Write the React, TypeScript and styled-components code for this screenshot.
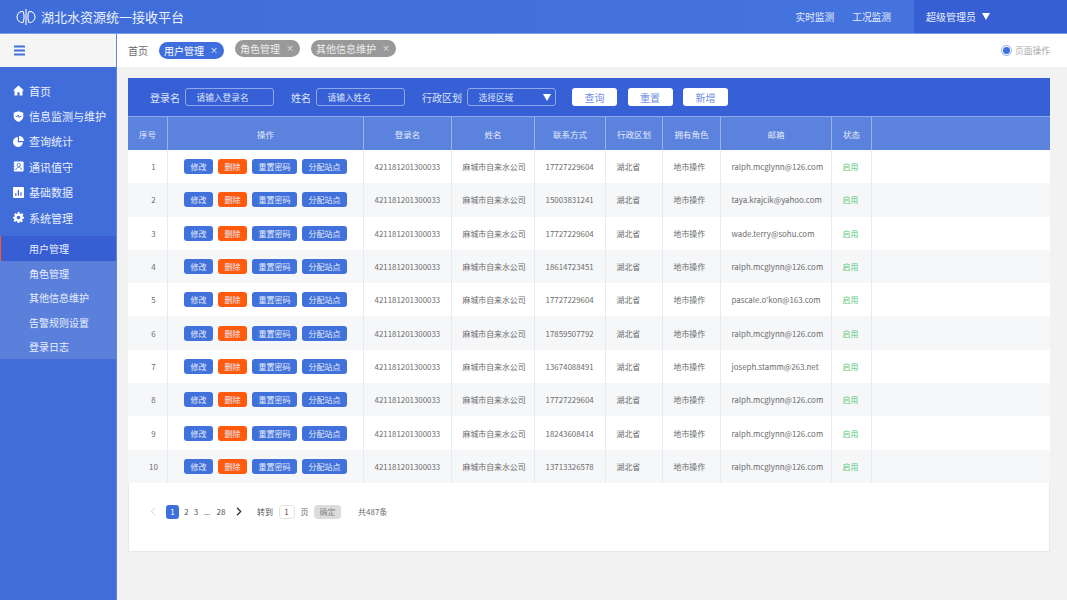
import React from "react";
import styled, { createGlobalStyle } from "styled-components";

const Global = createGlobalStyle`
  html, body { margin: 0; padding: 0; height: 100%; }
  body { font-family: "Noto Sans CJK SC", "Noto Sans", sans-serif; background: #f2f2f2; overflow: hidden; }
  #root { height: 100%; }
  * { box-sizing: border-box; }
`;

const Page = styled.div`
  width: 1067px;
  height: 600px;
  display: flex;
  flex-direction: column;
  overflow: hidden;
`;

const Header = styled.header`
  height: 34px;
  flex: none;
  display: flex;
  align-items: center;
  background: linear-gradient(90deg, #3e6cd9 0%, #4674de 85%);
  border-bottom: 1px solid #7f9ee8;
  color: #fff;
`;

const Brand = styled.div`
  display: flex;
  align-items: center;
  gap: 5px;
  padding-left: 16px;
  font-size: 13px;
  color: #eef3fd;
  flex: 1;
  svg { display: block; }
`;

const TopNav = styled.nav`
  display: flex;
  gap: 18px;
  padding-right: 23px;
  font-size: 9.7px;
  color: #e6edfb;
`;

const UserBox = styled.div`
  width: 153px;
  height: 33px;
  padding-left: 12px;
  display: flex;
  align-items: center;
  gap: 6px;
  background: #375fd3;
  font-size: 10px;
  color: #e6edfb;
`;

const Caret = styled.span`
  width: 0;
  height: 0;
  border-left: 4.5px solid transparent;
  border-right: 4.5px solid transparent;
  border-top: 7px solid #fff;
`;

const Body = styled.div`
  flex: 1;
  display: flex;
  min-height: 0;
`;

const Sidebar = styled.aside`
  width: 117px;
  flex: none;
  display: flex;
  flex-direction: column;
  background: #416ddb;
  border-right: 1px solid #5f84de;
`;

const Burger = styled.div`
  height: 33px;
  background: #f5f5f5;
  display: flex;
  align-items: center;
  padding-left: 14px;
`;

const Menu = styled.ul`
  list-style: none;
  margin: 0;
  padding: 11px 0 0;
`;

const MenuItem = styled.li`
  height: 25.4px;
  display: flex;
  align-items: center;
  gap: 5px;
  padding-left: 13px;
  font-size: 11px;
  color: #e9effc;
  white-space: nowrap;
  svg { flex: none; display: block; }
`;

const SubMenu = styled.ul`
  list-style: none;
  margin: 6px 0 0;
  padding: 0;
  background: #5a80dc;
`;

const SubItem = styled.li<{ $active?: boolean }>`
  height: 24.5px;
  display: flex;
  align-items: center;
  padding-left: ${(p) => (p.$active ? "28px" : "29px")};
  font-size: 10px;
  color: #e9effc;
  background: ${(p) => (p.$active ? "#375fd3" : "transparent")};
  border-left: ${(p) => (p.$active ? "1px solid #ff5a1f" : "0")};
`;

const Main = styled.main`
  flex: 1;
  min-width: 0;
  display: flex;
  flex-direction: column;
`;

const TabBar = styled.div`
  height: 33px;
  flex: none;
  background: #fff;
  display: flex;
  align-items: center;
  padding: 0 17px 1px 11px;
`;

const Crumb = styled.span`
  font-size: 10px;
  color: #666;
  margin-right: 11px;
`;

const Tab = styled.span<{ $active?: boolean }>`
  height: 17px;
  display: inline-flex;
  align-items: center;
  gap: 6px;
  padding: 0 6px 0 5px;
  margin-right: 11px;
  border-radius: 9px;
  font-size: 10px;
  color: ${(p) => (p.$active ? "#fff" : "#eee")};
  background: ${(p) => (p.$active ? "#3f6fdc" : "#999")};
  transform: translateY(${(p) => (p.$active ? "0" : "-2px")});
`;

const TabClose = styled.span`
  font-size: 8px;
  line-height: 1;
`;

const PageMode = styled.label`
  margin-left: auto;
  display: flex;
  align-items: center;
  gap: 3px;
  font-size: 8.75px;
  color: #aaa;
`;

const RadioDot = styled.span`
  width: 11px;
  height: 11px;
  border-radius: 50%;
  border: 1px solid #8fb0ee;
  background: #fff;
  display: flex;
  align-items: center;
  justify-content: center;
  &::after {
    content: "";
    width: 7px;
    height: 7px;
    border-radius: 50%;
    background: #3f6fdc;
  }
`;

const Content = styled.div`
  flex: 1;
  padding: 11px 17px 48px 11px;
  min-height: 0;
`;

const Panel = styled.section`
  height: 474px;
  background: #fff;
  border: 1px solid #e8e8e8;
  border-top: 0;
  display: flex;
  flex-direction: column;
`;

const FilterBar = styled.div`
  height: 38px;
  flex: none;
  display: flex;
  align-items: center;
  padding-left: 22px;
  margin: 0 -1px;
  background: #3860d6;
  font-size: 10px;
  color: #dde6fa;
`;

const FieldLabel = styled.span<{ $gap: number }>`
  margin-right: ${(p) => p.$gap}px;
  white-space: nowrap;
`;

const FieldBox = styled.div<{ $gapRight: number }>`
  width: 89px;
  height: 18px;
  border: 1px solid #8ea8ea;
  border-radius: 3px;
  margin-right: ${(p) => p.$gapRight}px;
  padding: 0 4px 0 10.5px;
  display: flex;
  align-items: center;
  justify-content: space-between;
  font-size: 8.7px;
  color: #dde6fa;
`;

const ActionBtn = styled.button`
  width: 45px;
  height: 18px;
  margin-right: 10.5px;
  border: 0;
  padding: 0;
  border-radius: 3px;
  background: #fff;
  color: #6f8fe3;
  font: inherit;
  font-size: 10px;
`;

const gridCols = "40px 196px 88px 83px 71px 57px 58px 111px 40px 1fr";

const HeadRow = styled.div`
  height: 34px;
  flex: none;
  display: grid;
  grid-template-columns: ${gridCols};
  margin: 0 -1px;
  background: #5b82dc;
  border-top: 1px solid #8aa5e8;
`;

const HeadCell = styled.div`
  display: flex;
  align-items: center;
  justify-content: center;
  font-size: 8.5px;
  color: #e4ebfb;
  border-right: 1px solid #9ab2ec;
  &:last-child { border-right: 0; }
`;

const Row = styled.div<{ $alt: boolean }>`
  height: 33.3px;
  flex: none;
  display: grid;
  grid-template-columns: ${gridCols};
  background: ${(p) => (p.$alt ? "#f6f7f9" : "#fff")};
  margin: 0 -1px;
`;

const Cell = styled.div<{ $color?: string }>`
  display: flex;
  align-items: center;
  padding-left: 10.5px;
  font-size: 7.9px;
  color: ${(p) => p.$color ?? "#6c6c6c"};
  border-right: 1px solid #e8eaee;
  white-space: nowrap;
  &:last-child { border-right: 0; }
`;

const IndexCell = styled(Cell)`
  justify-content: center;
  padding-left: 12px;
`;

const OpCell = styled(Cell)`
  justify-content: center;
  padding-left: 0;
  gap: 5px;
`;

const OpBtn = styled.span<{ $danger?: boolean; $w: number }>`
  width: ${(p) => p.$w}px;
  height: 15px;
  border-radius: 3px;
  display: flex;
  align-items: center;
  justify-content: center;
  font-size: 8px;
  color: #e4ebfb;
  background: ${(p) => (p.$danger ? "#ff5a0e" : "#4171da")};
`;

const Pager = styled.div`
  height: 14px;
  margin-top: 22px;
  display: flex;
  align-items: center;
  font-size: 8px;
  color: #6c6c6c;
`;

const PageSlot = styled.span<{ $w: number; $current?: boolean; $ml?: number }>`
  width: ${(p) => p.$w}px;
  height: 14px;
  margin-left: ${(p) => p.$ml ?? 0}px;
  display: flex;
  align-items: center;
  justify-content: center;
  border-radius: 3px;
  color: ${(p) => (p.$current ? "#fff" : "#555")};
  background: ${(p) => (p.$current ? "#3f6fdc" : "transparent")};
  svg { display: block; }
`;

const JumpBox = styled.span`
  width: 16px;
  height: 14px;
  margin: 0 6px 0 5.5px;
  border: 1px solid #e3e3e3;
  border-radius: 3px;
  display: flex;
  align-items: center;
  justify-content: center;
  color: #555;
`;

const Confirm = styled.span`
  width: 27px;
  height: 14px;
  margin: 0 17px 0 5.5px;
  border-radius: 4px;
  background: #dcdcdc;
  color: #888;
  display: flex;
  align-items: center;
  justify-content: center;
`;

const Logo = () => (
  <svg width="20" height="18" viewBox="0 0 20 18" fill="none" stroke="#fff" strokeWidth="1.100">
    <path d="M6.800 3.300C3.400 3.500 1 5.900 1 9s2.400 5.500 5.800 5.700" />
    <path d="M13.200 3.300C16.600 3.500 19 5.900 19 9s-2.400 5.500-5.800 5.700" />
    <path d="M6.800 3.300C8.500 6 8.500 12 6.800 14.700" />
    <path d="M13.200 3.300C11.500 6 11.500 12 13.200 14.700" />
    <path d="M10 1v16" />
  </svg>
);

const BurgerIcon = () => (
  <svg width="11" height="11" viewBox="0 0 11 11" fill="#3f6fdc">
    <rect x="0" y="0.500" width="11" height="2" rx="0.600" />
    <rect x="0" y="4.500" width="11" height="2" rx="0.600" />
    <rect x="0" y="8.500" width="11" height="2" rx="0.600" />
  </svg>
);

const HomeIcon = () => (
  <svg width="11" height="11" viewBox="0 0 11 11" fill="#fff">
    <path d="M5.500.600 11 5.600H9.500V10.400H6.600V7.200H4.400V10.400H1.500V5.600H0Z" />
  </svg>
);

const ShieldIcon = () => (
  <svg width="11" height="11" viewBox="0 0 11 11">
    <path fill="#fff" d="M5.500.200 10.300 1.700V5.200C10.300 8 8.200 9.900 5.500 10.900 2.800 9.900.700 8 .700 5.200V1.700Z" />
    <path fill="none" stroke="#3f6ad8" strokeWidth="0.900" d="M2.700 5.400H4.200L5.100 3.900 6 6.600 6.800 5.400H8.400" />
  </svg>
);

const PieIcon = () => (
  <svg width="11" height="11" viewBox="0 0 11 11" fill="#fff">
    <path d="M4.800 1A5 5 0 1 0 10 6.200H4.800Z" />
    <path d="M6 0a5 5 0 0 1 5 5H6Z" />
  </svg>
);

const ContactIcon = () => (
  <svg width="11" height="11" viewBox="0 0 11 11">
    <rect x="0.800" y="0.500" width="9.800" height="10" rx="1" fill="#fff" />
    <circle cx="5.700" cy="4" r="1.700" fill="none" stroke="#3f6ad8" strokeWidth="0.800" />
    <path d="M2.700 9C3 7.200 4.300 6.500 5.700 6.500S8.400 7.200 8.700 9" fill="none" stroke="#3f6ad8" strokeWidth="0.800" />
    <path d="M0 3h1.600M0 5.500h1.600M0 8h1.600" stroke="#3f6ad8" strokeWidth="0.700" />
  </svg>
);

const BarsIcon = () => (
  <svg width="11" height="11" viewBox="0 0 11 11">
    <rect x="0" y="0" width="11" height="11" rx="1" fill="#fff" />
    <path d="M2.800 6.200v2.600M5.400 3v5.800M8 5.200v3.600" stroke="#3f6ad8" strokeWidth="1.200" />
  </svg>
);

const GearIcon = () => (
  <svg width="11" height="11" viewBox="0 0 24 24" fill="#fff">
    <path
      fillRule="evenodd"
      d="M10 0h4l.6 3.300 2.500 1 2.800-1.900 2.800 2.800-1.900 2.800 1 2.500L24 11v3l-3.300.6-1 2.500 1.900 2.800-2.800 2.800-2.800-1.900-2.500 1L14 24h-4l-.6-3.200-2.500-1-2.800 1.900-2.800-2.800 1.900-2.800-1-2.500L0 14v-3l3.200-.5 1-2.500L2.300 5.200l2.800-2.800 2.800 1.900 2.500-1ZM12 8a4 4 0 1 0 0 8 4 4 0 0 0 0-8Z"
    />
  </svg>
);

const ChevronLeft = () => (
  <svg width="6" height="9" viewBox="0 0 6 9" fill="none" stroke="#cfcfcf" strokeWidth="1">
    <path d="M5 .800 1.300 4.500 5 8.200" />
  </svg>
);

const ChevronRight = () => (
  <svg width="6" height="9" viewBox="0 0 6 9" fill="none" stroke="#333" strokeWidth="1.300">
    <path d="M1 .800 4.700 4.500 1 8.200" />
  </svg>
);

const menu: [string, React.ReactNode][] = [
  ["首页", <HomeIcon />],
  ["信息监测与维护", <ShieldIcon />],
  ["查询统计", <PieIcon />],
  ["通讯值守", <ContactIcon />],
  ["基础数据", <BarsIcon />],
  ["系统管理", <GearIcon />],
];

const subMenu = ["用户管理", "角色管理", "其他信息维护", "告警规则设置", "登录日志"];

const headers = ["序号", "操作", "登录名", "姓名", "联系方式", "行政区划", "拥有角色", "邮箱", "状态", ""];

const rows: [string, string][] = [
  ["17727229604", "ralph.mcglynn@126.com"],
  ["15003831241", "taya.krajcik@yahoo.com"],
  ["17727229604", "wade.terry@sohu.com"],
  ["18614723451", "ralph.mcglynn@126.com"],
  ["17727229604", "pascale.o'kon@163.com"],
  ["17859507792", "ralph.mcglynn@126.com"],
  ["13674088491", "joseph.stamm@263.net"],
  ["17727229604", "ralph.mcglynn@126.com"],
  ["18243608414", "ralph.mcglynn@126.com"],
  ["13713326578", "ralph.mcglynn@126.com"],
];

export default function App() {
  return (
    <Page>
      <Global />
      <Header>
        <Brand>
          <Logo />
          湖北水资源统一接收平台
        </Brand>
        <TopNav>
          <span>实时监测</span>
          <span>工况监测</span>
        </TopNav>
        <UserBox>
          超级管理员
          <Caret />
        </UserBox>
      </Header>
      <Body>
        <Sidebar>
          <Burger>
            <BurgerIcon />
          </Burger>
          <Menu>
            {menu.map(([label, icon]) => (
              <MenuItem key={label}>
                {icon}
                {label}
              </MenuItem>
            ))}
          </Menu>
          <SubMenu>
            {subMenu.map((label, i) => (
              <SubItem key={label} $active={i === 0}>
                {label}
              </SubItem>
            ))}
          </SubMenu>
        </Sidebar>
        <Main>
          <TabBar>
            <Crumb>首页</Crumb>
            <Tab $active>
              用户管理<TabClose>×</TabClose>
            </Tab>
            <Tab>
              角色管理<TabClose>×</TabClose>
            </Tab>
            <Tab>
              其他信息维护<TabClose>×</TabClose>
            </Tab>
            <PageMode>
              <RadioDot />
              页面操作
            </PageMode>
          </TabBar>
          <Content>
            <Panel>
              <FilterBar>
                <FieldLabel $gap={5}>登录名</FieldLabel>
                <FieldBox $gapRight={17}>请输入登录名</FieldBox>
                <FieldLabel $gap={5}>姓名</FieldLabel>
                <FieldBox $gapRight={17}>请输入姓名</FieldBox>
                <FieldLabel $gap={5}>行政区划</FieldLabel>
                <FieldBox $gapRight={16}>
                  选择区域
                  <Caret />
                </FieldBox>
                <ActionBtn>查询</ActionBtn>
                <ActionBtn>重置</ActionBtn>
                <ActionBtn>新增</ActionBtn>
              </FilterBar>
              <HeadRow>
                {headers.map((h, i) => (
                  <HeadCell key={i}>{h}</HeadCell>
                ))}
              </HeadRow>
              {rows.map(([phone, email], i) => (
                <Row key={i} $alt={i % 2 === 1}>
                  <IndexCell>{i + 1}</IndexCell>
                  <OpCell>
                    <OpBtn $w={29}>修改</OpBtn>
                    <OpBtn $w={29} $danger>
                      删除
                    </OpBtn>
                    <OpBtn $w={45}>重置密码</OpBtn>
                    <OpBtn $w={45}>分配站点</OpBtn>
                  </OpCell>
                  <Cell>421181201300033</Cell>
                  <Cell>麻城市自来水公司</Cell>
                  <Cell>{phone}</Cell>
                  <Cell>湖北省</Cell>
                  <Cell>地市操作</Cell>
                  <Cell>{email}</Cell>
                  <Cell $color="#5cc878">启用</Cell>
                  <Cell />
                </Row>
              ))}
              <Pager>
                <PageSlot $w={8} $ml={20}>
                  <ChevronLeft />
                </PageSlot>
                <PageSlot $w={13} $ml={9} $current>
                  1
                </PageSlot>
                <PageSlot $w={11} $ml={2}>2</PageSlot>
                <PageSlot $w={8} $ml={0}>3</PageSlot>
                <PageSlot $w={12} $ml={1}>...</PageSlot>
                <PageSlot $w={14} $ml={1}>28</PageSlot>
                <PageSlot $w={8} $ml={7}>
                  <ChevronRight />
                </PageSlot>
                <PageSlot $w={16} $ml={14}>转到</PageSlot>
                <JumpBox>1</JumpBox>
                <span>页</span>
                <Confirm>确定</Confirm>
                <span>共487条</span>
              </Pager>
            </Panel>
          </Content>
        </Main>
      </Body>
    </Page>
  );
}
